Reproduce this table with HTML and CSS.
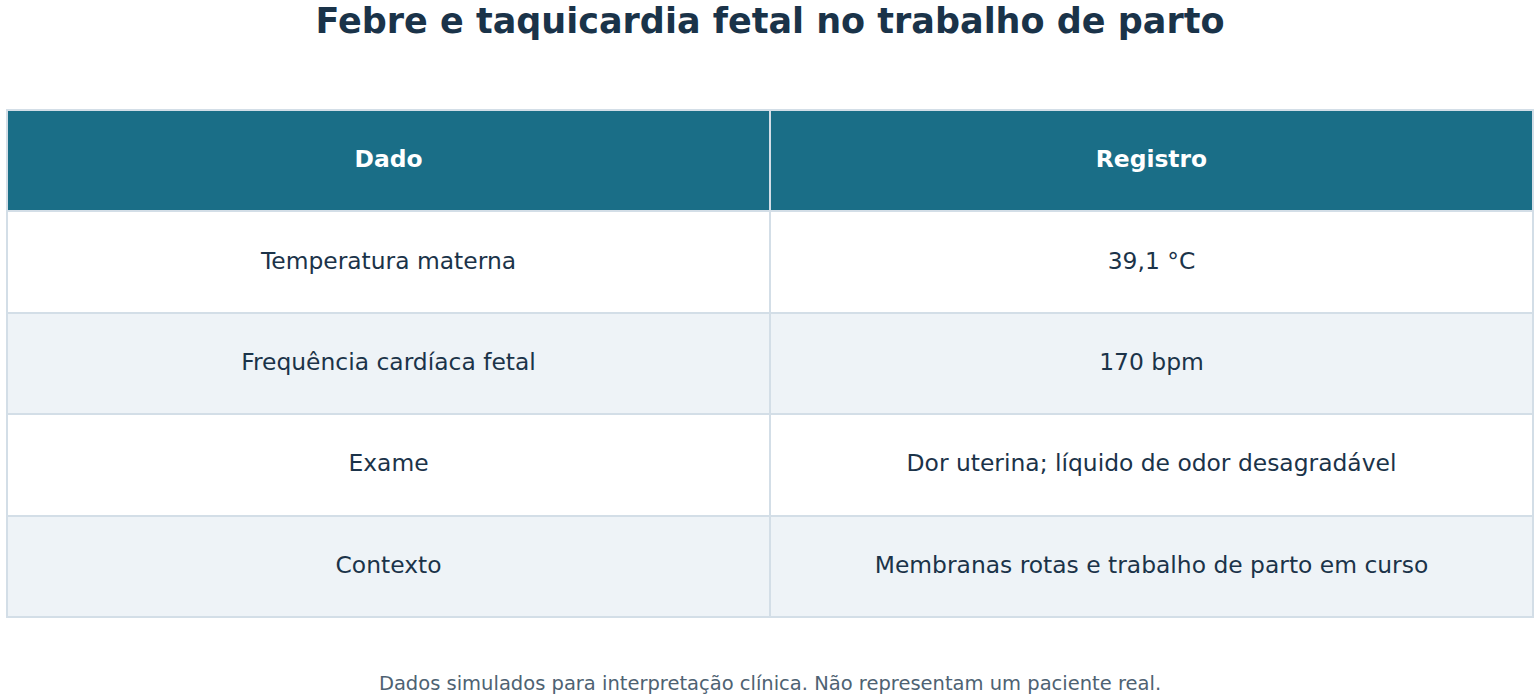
FILE: index.html
```html
<!DOCTYPE html>
<html lang="pt">
<head>
<meta charset="utf-8">
<link rel="stylesheet" href="styles.css">
</head>
<body>
<div class="page">
  <h1 class="title">Febre e taquicardia fetal no trabalho de parto</h1>
  <table class="data">
    <thead>
      <tr><th>Dado</th><th>Registro</th></tr>
    </thead>
    <tbody>
      <tr><td>Temperatura materna</td><td>39,1 °C</td></tr>
      <tr class="alt"><td>Frequência cardíaca fetal</td><td>170 bpm</td></tr>
      <tr><td>Exame</td><td>Dor uterina; líquido de odor desagradável</td></tr>
      <tr class="alt"><td>Contexto</td><td>Membranas rotas e trabalho de parto em curso</td></tr>
    </tbody>
  </table>
  <p class="note">Dados simulados para interpretação clínica. Não representam um paciente real.</p>
</div>
</body>
</html>
```
FILE: styles.css
```css
html, body {
  margin: 0;
  padding: 0;
  background: #ffffff;
}
.page {
  font-family: "DejaVu Sans", sans-serif;
  padding: 0 6px;
  display: flex;
  flex-direction: column;
  align-items: stretch;
}
.title {
  margin: 0;
  height: 109px;
  box-sizing: border-box;
  padding-top: 0;
  text-align: center;
  font-size: 35px;
  line-height: 42px;
  font-weight: bold;
  color: #1a3349;
}
.data {
  width: 100%;
  border-collapse: collapse;
  table-layout: fixed;
  border: 2px solid #d3dee7;
}
.data th, .data td {
  width: 50%;
  height: 101.4px;
  box-sizing: border-box;
  padding: 0 0 3px;
  text-align: center;
  vertical-align: middle;
  font-size: 23.4px;
  border: 2px solid #d3dee7;
}
.data th {
  background: #1a6e87;
  color: #ffffff;
  font-weight: bold;
  font-size: 23.4px;
}
.data td {
  color: #1b3349;
  background: #ffffff;
}
.data tr.alt td {
  background: #eef3f7;
}
.note {
  margin: 0;
  padding-top: 54px;
  text-align: center;
  font-size: 19.5px;
  line-height: 24px;
  color: #4e6272;
}
```
